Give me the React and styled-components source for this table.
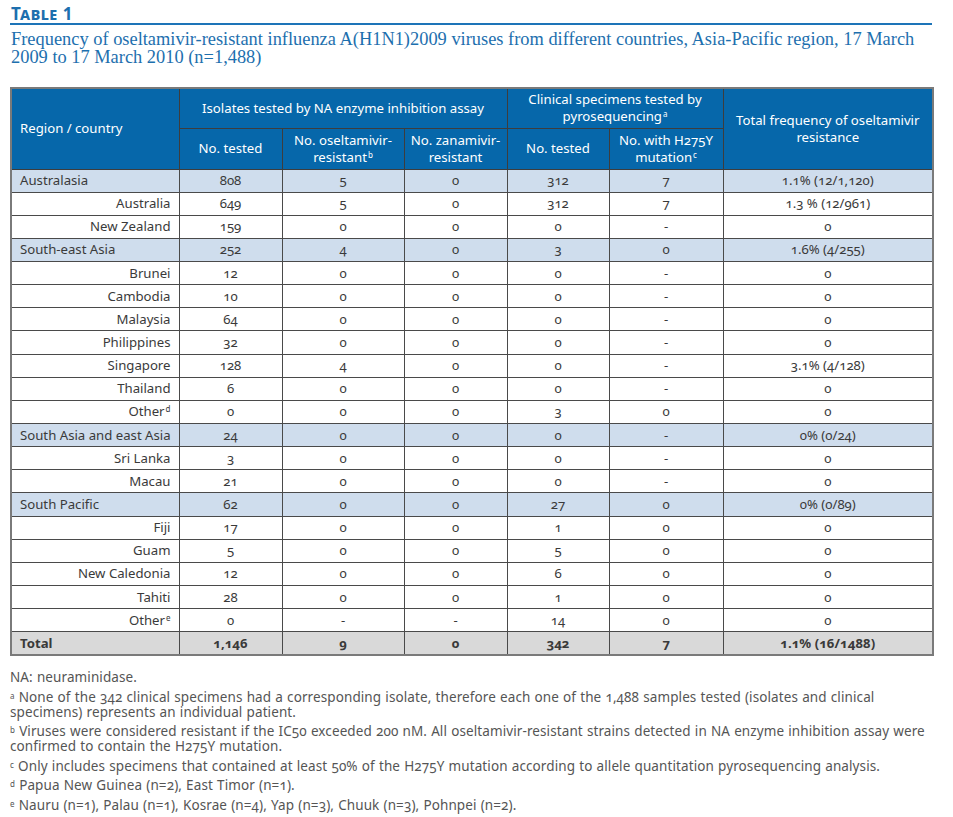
import React from "react";
import styled, { createGlobalStyle } from "styled-components";

const Global = createGlobalStyle`
  html, body { margin: 0; padding: 0; background: #fff; }
  body { font-family: "Noto Sans", "Open Sans", sans-serif; }
`;

const Page = styled.div`
  width: 953px;
  height: 817px;
  box-sizing: border-box;
  padding: 4px 21px 0 10px;
  overflow: hidden;
`;

const Label = styled.div`
  font-family: "Noto Sans", sans-serif;
  font-weight: 700;
  font-variant: small-caps;
  font-size: 17px;
  letter-spacing: 0.5px;
  color: #1d6fae;
  line-height: 19px;
  padding-left: 1px;
  border-bottom: 2px solid #1d74b8;
`;

const Title = styled.div`
  font-family: "Liberation Serif", serif;
  font-size: 18.4px;
  line-height: 18px;
  color: #1d6fae;
  margin-top: 5px;
  padding-left: 1px;
`;

const Table = styled.table`
  margin-top: 21px;
  width: 922px;
  border-collapse: collapse;
  border: 2px solid #7a7a7a;
  table-layout: fixed;
  font-size: 13.2px;
  color: #333;
  font-variant-numeric: oldstyle-nums;
  font-feature-settings: "onum" 1;
`;

const Th = styled.th`
  background: #0667aa;
  color: #fff;
  font-weight: 400;
  font-size: 13.2px;
  line-height: 17px;
  border: 1px solid #3d3d3d;
  text-align: ${(p) => (p.$left ? "left" : "center")};
  padding: ${(p) => (p.$left ? "0 8px" : "0 2px")};
  height: ${(p) => p.$h || 40}px;
  box-sizing: border-box;
  vertical-align: middle;
`;

const Td = styled.td`
  border: 1px solid #4a4a4a;
  height: 22.15px;
  padding: 0 8px;
  line-height: 15px;
  text-align: ${(p) => p.$align || "center"};
  font-weight: ${(p) => (p.$bold ? 700 : 400)};
  white-space: nowrap;
  color: #3a3a3a;
`;

const Tr = styled.tr`
  background: ${(p) =>
    p.$kind === "region" ? "#cfdded" : p.$kind === "total" ? "#d9d9d9" : "#fff"};
`;

const Sup = styled.sup`
  font-size: 8px;
  line-height: 0;
  vertical-align: 4px;
  margin-left: 1px;
`;

const Mark = styled.span`
  font-size: 8px;
  line-height: 8px;
  vertical-align: 3px;
`;

const Notes = styled.div`
  margin-top: 14px;
  font-family: "Noto Sans", sans-serif;
  font-size: 13.5px;
  letter-spacing: 0.1px;
  word-spacing: 0.5px;
  line-height: 15px;
  color: #555;
  font-variant-numeric: oldstyle-nums;
  font-feature-settings: "onum" 1;
  display: flex;
  flex-direction: column;
  gap: 4.5px;
`;

const Note = styled.div``;

const rows = [
  ["region", "Australasia", "808", "5", "0", "312", "7", "1.1% (12/1,120)"],
  ["country", "Australia", "649", "5", "0", "312", "7", "1.3 % (12/961)"],
  ["country", "New Zealand", "159", "0", "0", "0", "-", "0"],
  ["region", "South-east Asia", "252", "4", "0", "3", "0", "1.6% (4/255)"],
  ["country", "Brunei", "12", "0", "0", "0", "-", "0"],
  ["country", "Cambodia", "10", "0", "0", "0", "-", "0"],
  ["country", "Malaysia", "64", "0", "0", "0", "-", "0"],
  ["country", "Philippines", "32", "0", "0", "0", "-", "0"],
  ["country", "Singapore", "128", "4", "0", "0", "-", "3.1% (4/128)"],
  ["country", "Thailand", "6", "0", "0", "0", "-", "0"],
  ["country", "Other", "0", "0", "0", "3", "0", "0", "d"],
  ["region", "South Asia and east Asia", "24", "0", "0", "0", "-", "0% (0/24)"],
  ["country", "Sri Lanka", "3", "0", "0", "0", "-", "0"],
  ["country", "Macau", "21", "0", "0", "0", "-", "0"],
  ["region", "South Pacific", "62", "0", "0", "27", "0", "0% (0/89)"],
  ["country", "Fiji", "17", "0", "0", "1", "0", "0"],
  ["country", "Guam", "5", "0", "0", "5", "0", "0"],
  ["country", "New Caledonia", "12", "0", "0", "6", "0", "0"],
  ["country", "Tahiti", "28", "0", "0", "1", "0", "0"],
  ["country", "Other", "0", "-", "-", "14", "0", "0", "e"],
  ["total", "Total", "1,146", "9", "0", "342", "7", "1.1% (16/1488)"],
];

export default function App() {
  return (
    <Page>
      <Global />
      <Label>Table 1</Label>
      <Title>
        Frequency of oseltamivir-resistant influenza A(H1N1)2009 viruses from different countries, Asia-Pacific region, 17 March 2009 to 17 March 2010 (n=1,488)
      </Title>
      <Table>
        <colgroup>
          <col style={{ width: 168 }} />
          <col style={{ width: 103 }} />
          <col style={{ width: 122 }} />
          <col style={{ width: 103 }} />
          <col style={{ width: 102 }} />
          <col style={{ width: 114 }} />
          <col style={{ width: 210 }} />
        </colgroup>
        <thead>
          <tr>
            <Th rowSpan={2} $left>Region / country</Th>
            <Th colSpan={3}>Isolates tested by NA enzyme inhibition assay</Th>
            <Th colSpan={2}>
              Clinical specimens tested by
              <br />
              pyrosequencing<Sup>a</Sup>
            </Th>
            <Th rowSpan={2}>
              Total frequency of oseltamivir
              <br />
              resistance
            </Th>
          </tr>
          <tr>
            <Th $h={41}>No. tested</Th>
            <Th $h={41}>
              No. oseltamivir-
              <br />
              resistant<Sup>b</Sup>
            </Th>
            <Th $h={41}>
              No. zanamivir-
              <br />
              resistant
            </Th>
            <Th $h={41}>No. tested</Th>
            <Th $h={41}>
              No. with H275Y
              <br />
              mutation<Sup>c</Sup>
            </Th>
          </tr>
        </thead>
        <tbody>
          {rows.map((r, i) => {
            const [kind, name, ...rest] = r;
            const vals = rest.slice(0, 6);
            const sup = rest[6];
            const bold = kind === "total";
            return (
              <Tr key={i} $kind={kind}>
                <Td $align={kind === "country" ? "right" : "left"} $bold={bold}>
                  {name}
                  {sup && <Sup>{sup}</Sup>}
                </Td>
                {vals.map((v, j) => (
                  <Td key={j} $bold={bold}>
                    {v}
                  </Td>
                ))}
              </Tr>
            );
          })}
        </tbody>
      </Table>
      <Notes>
        <Note>NA: neuraminidase.</Note>
        <Note>
          <Mark>a</Mark> None of the 342 clinical specimens had a corresponding isolate, therefore each one of the 1,488 samples tested (isolates and clinical specimens) represents an individual patient.
        </Note>
        <Note>
          <Mark>b</Mark> Viruses were considered resistant if the IC50 exceeded 200 nM. All oseltamivir-resistant strains detected in NA enzyme inhibition assay were confirmed to contain the H275Y mutation.
        </Note>
        <Note>
          <Mark>c</Mark> Only includes specimens that contained at least 50% of the H275Y mutation according to allele quantitation pyrosequencing analysis.
        </Note>
        <Note>
          <Mark>d</Mark> Papua New Guinea (n=2), East Timor (n=1).
        </Note>
        <Note>
          <Mark>e</Mark> Nauru (n=1), Palau (n=1), Kosrae (n=4), Yap (n=3), Chuuk (n=3), Pohnpei (n=2).
        </Note>
      </Notes>
    </Page>
  );
}
